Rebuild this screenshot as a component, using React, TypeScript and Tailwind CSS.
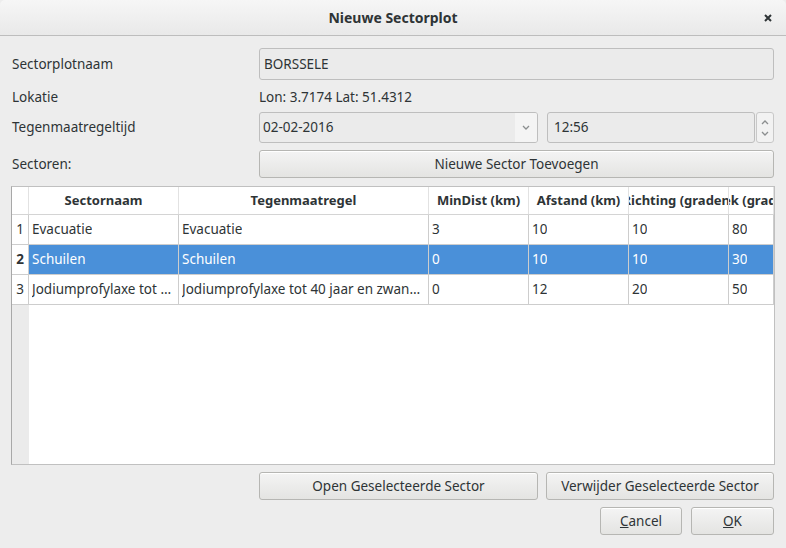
import React from 'react';

const font = { fontFamily: '"Noto Sans", "Open Sans", sans-serif' };

const rows = [
  { n: '1', naam: 'Evacuatie', regel: 'Evacuatie', min: '3', afstand: '10', richting: '10', hoek: '80' },
  { n: '2', naam: 'Schuilen', regel: 'Schuilen', min: '0', afstand: '10', richting: '10', hoek: '30', selected: true },
  { n: '3', naam: 'Jodiumprofylaxe tot 40 jaar', regel: 'Jodiumprofylaxe tot 40 jaar en zwangere vrouwen', min: '0', afstand: '12', richting: '20', hoek: '50' },
];

const headers = [
  { label: 'Sectornaam', w: 'w-[150px]' },
  { label: 'Tegenmaatregel', w: 'w-[250px]' },
  { label: 'MinDist (km)', w: 'w-[100px]' },
  { label: 'Afstand (km)', w: 'w-[100px]' },
  { label: 'Richting (graden)', w: 'w-[100px]' },
  { label: 'Hoek (graden)', w: 'flex-1' },
];

const Button: React.FC<{ className?: string; children: React.ReactNode }> = ({ className = '', children }) => (
  <button
    className={`flex items-center justify-center rounded-[3px] border border-[#b6b6b3] bg-gradient-to-b from-[#f4f4f4] to-[#e4e4e2] text-[13.5px] text-[#2e3436] shadow-[inset_0_1px_0_#fff] ${className}`}
  >
    {children}
  </button>
);

const Chevron: React.FC<{ up?: boolean }> = ({ up }) => (
  <svg width="8" height="5" viewBox="0 0 8 5" className="block">
    <path d={up ? 'M1 4 L4 1 L7 4' : 'M1 1 L4 4 L7 1'} fill="none" stroke="#8b8e8f" strokeWidth="1.3" />
  </svg>
);

export default function App() {
  return (
    <div style={font} className="w-[786px] h-[548px] bg-[#ededed] text-[13.5px] text-[#2e3436] flex flex-col overflow-hidden">
      {/* Title bar */}
      <div className="relative h-[36px] shrink-0 flex items-center justify-center border-b border-[#bdbdbd] bg-gradient-to-b from-[#f6f6f6] to-[#e9e9e9] rounded-t-[5px]">
        <span className="font-bold text-[14px] text-[#2e3436]">Nieuwe Sectorplot</span>
        <span className="absolute right-[13px] top-[13px]">
          <svg width="10" height="10" viewBox="0 0 10 10">
            <path d="M2 2 L8 8 M8 2 L2 8" stroke="#2e3436" strokeWidth="2" />
          </svg>
        </span>
      </div>

      <div className="flex flex-col px-[12px] pt-[12px]">
        {/* Sectorplotnaam */}
        <div className="flex h-[32px] items-center">
          <div className="w-[247px]">Sectorplotnaam</div>
          <div className="flex-1 h-full flex items-center rounded-[3px] border border-[#bebebe] bg-[#ebebeb] px-[4px]">BORSSELE</div>
        </div>

        {/* Lokatie */}
        <div className="flex h-[22px] items-center mt-[6px]">
          <div className="w-[247px]">Lokatie</div>
          <div>Lon: 3.7174 Lat: 51.4312</div>
        </div>

        {/* Tegenmaatregeltijd */}
        <div className="flex h-[31px] items-center mt-[4px]">
          <div className="w-[247px]">Tegenmaatregeltijd</div>
          <div className="w-[279px] h-full flex rounded-[3px] border border-[#bebebe] bg-[#ebebeb] overflow-hidden">
            <div className="flex-1 flex items-center px-[3px]">02-02-2016</div>
            <div className="w-[22px] flex items-center justify-center bg-[#f4f4f4]">
              <Chevron />
            </div>
          </div>
          <div className="ml-[9px] w-[208px] h-full flex items-center rounded-[3px] border border-[#bebebe] bg-[#ebebeb] px-[6px]">12:56</div>
          <div className="ml-[1px] flex-1 h-full flex flex-col items-center justify-center gap-[6px] rounded-[3px] border border-[#c8c8c8] bg-[#f2f2f2]">
            <Chevron up />
            <Chevron />
          </div>
        </div>

        {/* Sectoren */}
        <div className="flex h-[28px] items-center mt-[7px]">
          <div className="w-[247px]">Sectoren:</div>
          <Button className="flex-1 h-full">Nieuwe Sector Toevoegen</Button>
        </div>

        {/* Table */}
        <div className="mt-[8px] -ml-[1px] h-[279px] w-[764px] border border-[#c0c0c0] border-l-[#a8a8a8] bg-white flex flex-col overflow-hidden">
          <div className="flex h-[28px] shrink-0 border-b border-[#d4d4d4] font-bold text-[13px]">
            <div className="w-[17px] shrink-0 border-r border-[#e2e2e2]" />
            {headers.map((h, i) => (
              <div
                key={i}
                className={`${h.w} shrink-0 min-w-0 flex items-center justify-center overflow-hidden whitespace-nowrap border-r border-[#e2e2e2]`}
              >
                {h.label}
              </div>
            ))}
          </div>
          {rows.map((r, i) => (
            <div key={i} className="flex h-[30px] shrink-0 border-b border-[#cdcdcd]">
              <div className={`w-[17px] shrink-0 flex items-center justify-center border-r border-[#cdcdcd] ${r.selected ? 'font-bold' : ''}`}>
                {r.n}
              </div>
              {[r.naam, r.regel, r.min, r.afstand, r.richting, r.hoek].map((c, j) => (
                <div
                  key={j}
                  className={`${headers[j].w} shrink-0 min-w-0 flex items-center px-[3px] border-r border-[#cdcdcd] ${
                    r.selected ? 'bg-[#4a90d9] text-white' : ''
                  }`}
                >
                  <span className="truncate">{c}</span>
                </div>
              ))}
            </div>
          ))}
          <div className="flex flex-1">
            <div className="w-[17px] shrink-0 bg-[#ebebeb]" />
            <div className="flex-1 bg-white" />
          </div>
        </div>

        {/* Bottom buttons */}
        <div className="flex h-[28px] mt-[7px]">
          <div className="w-[247px]" />
          <Button className="w-[279px] h-full">Open Geselecteerde Sector</Button>
          <Button className="ml-[8px] flex-1 h-full">Verwijder Geselecteerde Sector</Button>
        </div>
        <div className="flex h-[28px] mt-[7px] justify-end">
          <Button className="w-[82px] h-full">
            <span><span className="underline">C</span>ancel</span>
          </Button>
          <Button className="ml-[9px] w-[83px] h-full">
            <span><span className="underline">O</span>K</span>
          </Button>
        </div>
      </div>
    </div>
  );
}
